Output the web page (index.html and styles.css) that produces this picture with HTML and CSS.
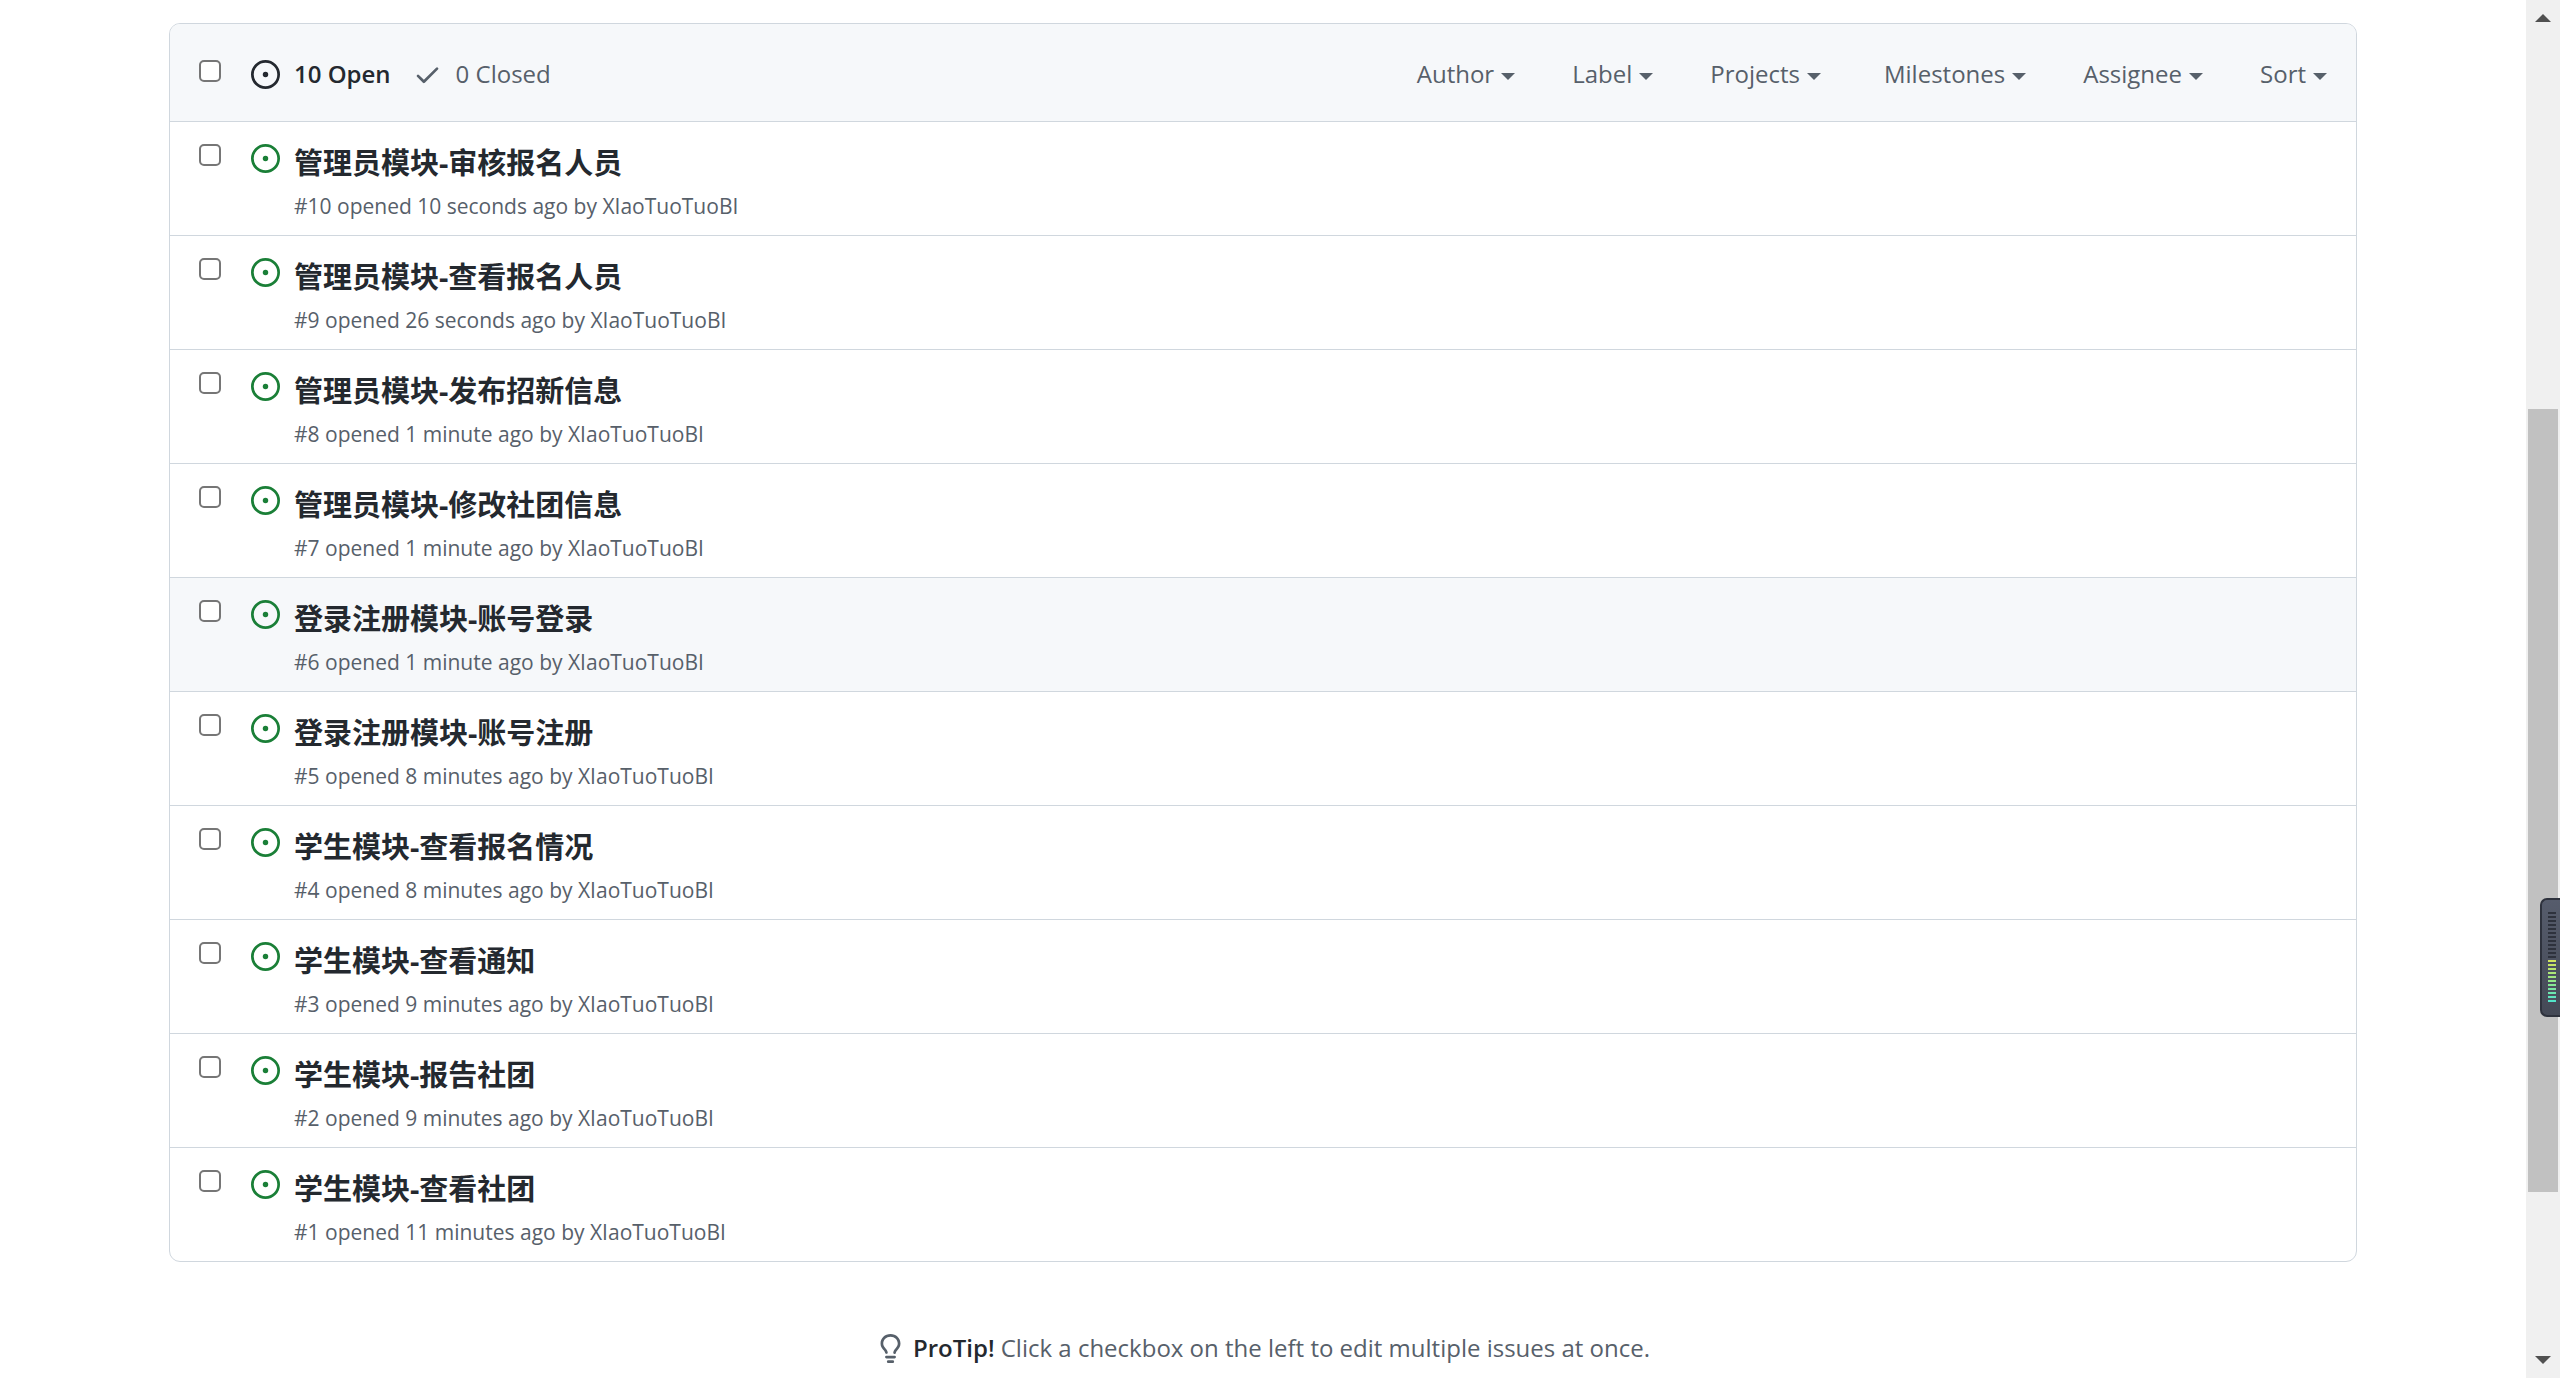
FILE: index.html
```html
<!DOCTYPE html>
<html lang="en">
<head>
<meta charset="utf-8">
<title>Issues</title>
<link rel="stylesheet" href="styles.css">
</head>
<body>
<svg class="sprite" aria-hidden="true">
  <symbol id="issue" viewBox="0 0 16 16"><path d="M8 9.5a1.5 1.5 0 100-3 1.5 1.5 0 000 3z"/><path fill-rule="evenodd" d="M8 0a8 8 0 100 16A8 8 0 008 0zM1.5 8a6.5 6.5 0 1113 0 6.5 6.5 0 01-13 0z"/></symbol>
  <symbol id="check" viewBox="0 0 16 16"><path d="M13.78 4.22a.75.75 0 010 1.06l-7.25 7.25a.75.75 0 01-1.06 0L2.22 9.28a.75.75 0 011.06-1.06L6 10.94l6.72-6.72a.75.75 0 011.06 0z"/></symbol>
  <symbol id="bulb" viewBox="0 0 16 16"><path d="M8 1.5c-2.363 0-4 1.69-4 3.75 0 .984.424 1.625.984 2.304l.214.253c.223.264.47.556.673.848.284.411.537.896.621 1.49a.75.75 0 01-1.484.211c-.04-.282-.163-.547-.37-.847a8.695 8.695 0 00-.542-.68c-.084-.1-.173-.205-.268-.32C3.201 7.75 2.5 6.766 2.5 5.25 2.5 2.31 4.863 0 8 0s5.5 2.31 5.5 5.25c0 1.516-.701 2.5-1.328 3.259-.095.115-.184.22-.268.319-.207.245-.383.453-.541.681-.208.3-.33.565-.37.847a.75.75 0 01-1.485-.212c.084-.593.337-1.078.621-1.489.203-.292.45-.584.673-.848.075-.088.147-.173.213-.253.561-.679.985-1.32.985-2.304 0-2.06-1.637-3.75-4-3.75zM6 15.25a.75.75 0 01.75-.75h2.5a.75.75 0 010 1.5h-2.5a.75.75 0 01-.75-.75zM5.75 12a.75.75 0 000 1.5h4.5a.75.75 0 000-1.5h-4.5z"/></symbol>
</svg>
<div class="page">
  <main class="content">
    <section class="box" aria-label="Issues">
      <header class="toolbar">
        <input class="tick" type="checkbox" aria-label="Select all issues">
        <nav class="states">
          <a class="state current" href="#open"><svg class="icon"><use href="#issue"/></svg>10 Open</a>
          <a class="state" href="#closed"><svg class="icon"><use href="#check"/></svg>0 Closed</a>
        </nav>
        <div class="filters">
          <button class="filter" type="button" aria-haspopup="menu">Author</button>
          <button class="filter" type="button" aria-haspopup="menu">Label</button>
          <button class="filter wide" type="button" aria-haspopup="menu">Projects</button>
          <button class="filter" type="button" aria-haspopup="menu">Milestones</button>
          <button class="filter" type="button" aria-haspopup="menu">Assignee</button>
          <button class="filter" type="button" aria-haspopup="menu">Sort</button>
        </div>
      </header>
      <ul class="issues">
        <li class="issue">
          <input class="tick" type="checkbox" aria-labelledby="i10">
          <svg class="icon open"><use href="#issue"/></svg>
          <div class="body"><a class="title" id="i10" href="#10">管理员模块-审核报名人员</a><p class="meta">#10 opened 10 seconds ago by <a href="#user">XIaoTuoTuoBI</a></p></div>
        </li>
        <li class="issue">
          <input class="tick" type="checkbox" aria-labelledby="i9">
          <svg class="icon open"><use href="#issue"/></svg>
          <div class="body"><a class="title" id="i9" href="#9">管理员模块-查看报名人员</a><p class="meta">#9 opened 26 seconds ago by <a href="#user">XIaoTuoTuoBI</a></p></div>
        </li>
        <li class="issue">
          <input class="tick" type="checkbox" aria-labelledby="i8">
          <svg class="icon open"><use href="#issue"/></svg>
          <div class="body"><a class="title" id="i8" href="#8">管理员模块-发布招新信息</a><p class="meta">#8 opened 1 minute ago by <a href="#user">XIaoTuoTuoBI</a></p></div>
        </li>
        <li class="issue">
          <input class="tick" type="checkbox" aria-labelledby="i7">
          <svg class="icon open"><use href="#issue"/></svg>
          <div class="body"><a class="title" id="i7" href="#7">管理员模块-修改社团信息</a><p class="meta">#7 opened 1 minute ago by <a href="#user">XIaoTuoTuoBI</a></p></div>
        </li>
        <li class="issue active">
          <input class="tick" type="checkbox" aria-labelledby="i6">
          <svg class="icon open"><use href="#issue"/></svg>
          <div class="body"><a class="title" id="i6" href="#6">登录注册模块-账号登录</a><p class="meta">#6 opened 1 minute ago by <a href="#user">XIaoTuoTuoBI</a></p></div>
        </li>
        <li class="issue">
          <input class="tick" type="checkbox" aria-labelledby="i5">
          <svg class="icon open"><use href="#issue"/></svg>
          <div class="body"><a class="title" id="i5" href="#5">登录注册模块-账号注册</a><p class="meta">#5 opened 8 minutes ago by <a href="#user">XIaoTuoTuoBI</a></p></div>
        </li>
        <li class="issue">
          <input class="tick" type="checkbox" aria-labelledby="i4">
          <svg class="icon open"><use href="#issue"/></svg>
          <div class="body"><a class="title" id="i4" href="#4">学生模块-查看报名情况</a><p class="meta">#4 opened 8 minutes ago by <a href="#user">XIaoTuoTuoBI</a></p></div>
        </li>
        <li class="issue">
          <input class="tick" type="checkbox" aria-labelledby="i3">
          <svg class="icon open"><use href="#issue"/></svg>
          <div class="body"><a class="title" id="i3" href="#3">学生模块-查看通知</a><p class="meta">#3 opened 9 minutes ago by <a href="#user">XIaoTuoTuoBI</a></p></div>
        </li>
        <li class="issue">
          <input class="tick" type="checkbox" aria-labelledby="i2">
          <svg class="icon open"><use href="#issue"/></svg>
          <div class="body"><a class="title" id="i2" href="#2">学生模块-报告社团</a><p class="meta">#2 opened 9 minutes ago by <a href="#user">XIaoTuoTuoBI</a></p></div>
        </li>
        <li class="issue">
          <input class="tick" type="checkbox" aria-labelledby="i1">
          <svg class="icon open"><use href="#issue"/></svg>
          <div class="body"><a class="title" id="i1" href="#1">学生模块-查看社团</a><p class="meta">#1 opened 11 minutes ago by <a href="#user">XIaoTuoTuoBI</a></p></div>
        </li>
      </ul>
    </section>
    <div class="protip"><svg class="icon"><use href="#bulb"/></svg><p><strong>ProTip!</strong> Click a checkbox on the left to edit multiple issues at once.</p></div>
  </main>
  <aside class="rail" aria-hidden="true">
    <svg class="arrow" viewBox="0 0 34 34"><path d="M9 22l8-8 8 8z"/></svg>
    <div class="track"><span class="above"></span><span class="thumb"></span><span class="below"></span></div>
    <svg class="arrow" viewBox="0 0 34 34"><path d="M9 12l8 8 8-8z"/></svg>
    <div class="meter"><div class="idle"></div><div class="level"></div></div>
  </aside>
</div>
</body>
</html>
```
FILE: styles.css
```css
* { box-sizing: border-box; }

body {
  margin: 0;
  background: #fff;
  color: #24292f;
  font-family: "Open Sans", "Noto Sans CJK SC", sans-serif;
  font-size: 24px;
  line-height: 38px;
}

a { color: inherit; text-decoration: none; }
p, ul { margin: 0; padding: 0; }
.sprite { position: absolute; width: 0; height: 0; }

.page {
  display: grid;
  grid-template-columns: minmax(0, 1fr) 34px;
  grid-template-rows: 100%;
  height: 100vh;
  overflow: hidden;
}

.content {
  width: 100%;
  max-width: 2304px;
  margin: 0 auto;
  padding: 23px 58px 0;
}

.box {
  border: 1px solid #d0d7de;
  border-radius: 11px;
  overflow: hidden;
}

.icon { flex: none; width: 29px; height: 29px; fill: currentColor; }
.open { color: #1a7f37; }

.tick {
  appearance: none;
  flex: none;
  width: 22px;
  height: 22px;
  margin: 0;
  border: 2px solid #767676;
  border-radius: 5px;
  background: #fff;
}
.tick:checked { background: #0969da; }

.toolbar {
  display: flex;
  align-items: center;
  padding: 31px 29px 28px;
  gap: 30px;
  background: #f6f8fa;
  color: #57606a;
}
.toolbar .tick { margin-bottom: 6px; }

.states { display: flex; gap: 22px; }
.state { display: flex; align-items: center; gap: 14px; }
.current { color: #24292f; font-weight: 600; }

.filters { display: flex; gap: 57px; margin-left: auto; }
.filter {
  display: flex;
  align-items: center;
  gap: 7px;
  padding: 0;
  border: 0;
  background: none;
  color: inherit;
  font: inherit;
}
.filter::after {
  content: "";
  margin-top: 4px;
  border: 7px solid transparent;
  border-top-color: currentColor;
  border-bottom: 0;
}
.wide { margin-right: 6px; }

.issues { list-style: none; }
.issue {
  display: flex;
  align-items: flex-start;
  min-height: 114px;
  padding: 22px 29px 0;
  border-top: 1px solid #d0d7de;
}
.issue .icon { margin: 0 14px 0 30px; }
.active { background: #f6f8fa; }

.title {
  display: block;
  font-size: 29px;
  font-weight: 700;
  line-height: 38px;
}
.meta {
  margin-top: 8px;
  color: #57606a;
  font-size: 21px;
  line-height: 32px;
}

.protip {
  display: flex;
  justify-content: center;
  align-items: center;
  gap: 8px;
  margin-top: 67px;
  color: #57606a;
}
.protip strong { color: #24292f; font-weight: 600; }

.rail {
  position: relative;
  display: flex;
  flex-direction: column;
  background: #f0f0f0;
}
.arrow { flex: none; width: 34px; height: 34px; fill: #505050; }
.track { display: flex; flex: 1; flex-direction: column; padding: 0 2px; }
.above { flex: 375; }
.thumb { flex: 783; background: #c1c1c1; }
.below { flex: 152; }

/* Level meter docked to the window edge, over the scroll bar */
.meter {
  position: absolute;
  top: 65%;
  right: 0;
  width: 20px;
  height: 119px;
  margin-top: 2px;
  padding: 12px 4px 0 6px;
  border: 2px solid #2e323d;
  border-right: 0;
  border-radius: 7px 0 0 7px;
  background: linear-gradient(#565c6c, #444956);
}
.idle {
  height: 48px;
  background: repeating-linear-gradient(#2e323d 0 2px, transparent 2px 4px);
}
.level {
  height: 42px;
  background:
    repeating-linear-gradient(transparent 0 2px, #4c5160 2px 4px),
    linear-gradient(#d4e45c, #94e888 50%, #50e4cc);
}
```
